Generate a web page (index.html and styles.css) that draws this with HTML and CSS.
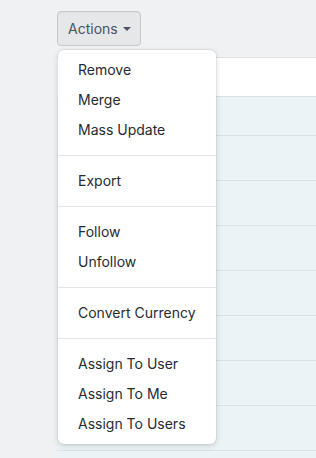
FILE: index.html
```html
<!DOCTYPE html>
<html>
<head>
<meta charset="utf-8">
<link rel="stylesheet" href="styles.css">
</head>
<body>
<div class="page">
  <button class="btn">Actions <span class="caret"></span></button>
  <div class="table">
    <div class="row head"></div>
    <div class="row short"></div>
    <div class="row"></div>
    <div class="row"></div>
    <div class="row"></div>
    <div class="row"></div>
    <div class="row"></div>
    <div class="row"></div>
    <div class="row"></div>
    <div class="row last"></div>
  </div>
  <ul class="menu">
    <li>Remove</li>
    <li>Merge</li>
    <li>Mass Update</li>
    <li class="divider"></li>
    <li>Export</li>
    <li class="divider"></li>
    <li>Follow</li>
    <li>Unfollow</li>
    <li class="divider"></li>
    <li>Convert Currency</li>
    <li class="divider"></li>
    <li>Assign To User</li>
    <li>Assign To Me</li>
    <li>Assign To Users</li>
  </ul>
</div>
</body>
</html>
```
FILE: styles.css
```css
html, body {
  margin: 0;
  padding: 0;
  background: #f0f1f3;
  font-family: Inter, "Noto Sans", sans-serif;
}
.page {
  position: relative;
  height: 458px;
  box-sizing: border-box;
  overflow: hidden;
  padding: 11px 0 0 57px;
}
.btn {
  display: flex;
  align-items: center;
  gap: 5px;
  height: 35px;
  padding: 0 9px 0 10px;
  background: #e6e7e9;
  border: 1px solid #c5c8cc;
  border-radius: 4px;
  font-family: Inter, "Noto Sans", sans-serif;
  font-size: 14px;
  color: #4b5361;
  box-shadow: inset 0 1px 2px rgba(0,0,0,0.04);
}
.caret {
  width: 0;
  height: 0;
  border-left: 4px solid transparent;
  border-right: 4px solid transparent;
  border-top: 4px solid #4b5361;
  margin-top: 1px;
}
.table {
  margin-top: 11px;
  border-top: 1px solid #dfe2e5;
}
.row {
  height: 44px;
  background: #ebf3f6;
  border-bottom: 1px solid #dfe2e5;
}
.row.head {
  height: 38px;
  background: #ffffff;
}
.row.short {
  height: 38px;
}
.row.last {
  height: 7px;
  border-bottom: 0;
}
.menu {
  position: absolute;
  top: 50px;
  left: 58px;
  width: 158px;
  margin: 0;
  padding: 5px 0;
  list-style: none;
  background: #ffffff;
  border-radius: 6px;
  box-shadow: 0 0 0 1px rgba(0,0,0,0.05), 0 2px 6px rgba(0,0,0,0.14);
}
.menu li {
  height: 30px;
  line-height: 30px;
  padding-left: 20px;
  font-size: 14px;
  color: #262b33;
  white-space: nowrap;
}
.menu li.divider {
  height: 1px;
  padding: 0;
  margin: 10px 0;
  background: #e3e5e8;
}
```
